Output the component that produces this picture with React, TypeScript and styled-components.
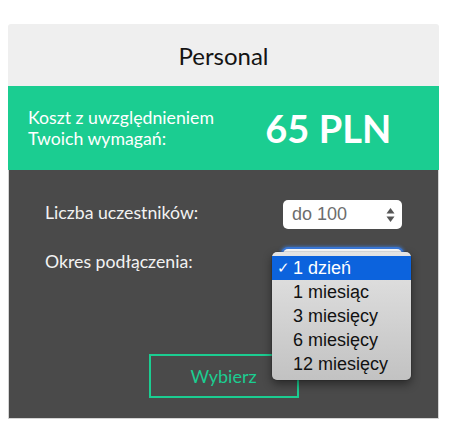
import { FC } from "react";
import styled, { createGlobalStyle } from "styled-components";

const GlobalStyle = createGlobalStyle`
   body {
      margin: 0;
      background: #fff;
      font-family: Lato, "Open Sans", sans-serif;
   }
`;

const Card = styled.div`
   width: 431px;
   margin: 24px 0 0 8px;
   border-radius: 3px 3px 0 0;
`;

const Header = styled.div`
   height: 62px;
   background: #efefef;
   border-radius: 3px 3px 0 0;
   display: flex;
   align-items: center;
   justify-content: center;
   font-size: 24px;
   color: #141414;
`;

const PriceBar = styled.div`
   height: 84px;
   background: #1bcd91;
   display: grid;
   grid-template-columns: 1fr 1fr;
   align-items: center;
   color: #fff;
`;

const PriceLabel = styled.p`
   margin: 0;
   padding-left: 20px;
   font-size: 17.7px;
   line-height: 21px;
`;

const Price = styled.p`
   margin: 0;
   text-align: center;
   font-size: 38px;
   font-weight: 700;
   padding-right: 6px;
`;

const Body = styled.div`
   background: #4a4a4a;
   border: 1px solid #d4d4d4;
   border-top: none;
   padding: 30px 36px 20px;
   display: flex;
   flex-direction: column;
   align-items: center;
`;

const Form = styled.div`
   width: 100%;
   display: grid;
   grid-template-columns: 1fr 119px;
   grid-auto-rows: 29px;
   row-gap: 20px;
   align-items: center;
`;

const Label = styled.span`
   color: #f2f2f2;
   font-size: 17.7px;
   margin-top: -5px;
`;

const SelectBox = styled.div<{ $focused?: boolean }>`
   position: relative;
   height: 29px;
   border-radius: 5px;
   background: #fff;
   display: flex;
   align-items: center;
   justify-content: space-between;
   padding: 0 7px 0 9px;
   box-sizing: border-box;
   font-family: "Liberation Sans", Arial, sans-serif;
   font-size: 18px;
   color: #6d6d6d;
   box-shadow: ${(p) =>
      p.$focused ? "0 0 0 2px #3a78d8, 0 0 3px 3px rgba(60,130,230,0.6)" : "none"};
`;

const Popup = styled.ul`
   position: absolute;
   left: -11px;
   top: 3px;
   width: 139px;
   margin: 0;
   padding: 4px 0;
   list-style: none;
   border-radius: 5px;
   background: linear-gradient(#e4e4e4, #c2c2c2);
   box-shadow: 0 4px 10px rgba(0, 0, 0, 0.45), 0 0 0 0.5px rgba(0, 0, 0, 0.2);
   z-index: 2;
`;

const Option = styled.li<{ $selected?: boolean }>`
   height: 24px;
   display: flex;
   align-items: center;
   padding-left: 21px;
   position: relative;
   font-family: "Liberation Sans", Arial, sans-serif;
   font-size: 18px;
   color: ${(p) => (p.$selected ? "#fff" : "#111")};
   background: ${(p) => (p.$selected ? "#0c63dd" : "transparent")};
`;

const Check = styled.span`
   position: absolute;
   left: 5px;
   font-size: 15px;
`;

const Button = styled.button`
   margin-top: 76px;
   width: 150px;
   height: 44px;
   background: transparent;
   border: 2px solid #1bcd91;
   color: #1bcd91;
   font-family: Lato, "Open Sans", sans-serif;
   font-size: 18px;
   cursor: pointer;
`;

const Arrows: FC = () => (
   <svg width="9" height="16" viewBox="0 0 9 16">
      <path d="M4.5 1 L8.5 6.5 L0.5 6.5 Z" fill="#555" />
      <path d="M4.5 15 L8.5 9.5 L0.5 9.5 Z" fill="#555" />
   </svg>
);

const periods = ["1 dzień", "1 miesiąc", "3 miesięcy", "6 miesięcy", "12 miesięcy"];

const App: FC = () => {
   return (
      <>
         <GlobalStyle />
         <Card>
            <Header>Personal</Header>
            <PriceBar>
               <PriceLabel>
                  Koszt z uwzględnieniem
                  <br />
                  Twoich wymagań:
               </PriceLabel>
               <Price>65 PLN</Price>
            </PriceBar>
            <Body>
               <Form>
                  <Label>Liczba uczestników:</Label>
                  <SelectBox>
                     <span>do 100</span>
                     <Arrows />
                  </SelectBox>
                  <Label>Okres podłączenia:</Label>
                  <SelectBox $focused>
                     <Popup>
                        {periods.map((p, i) => (
                           <Option key={p} $selected={i === 0}>
                              {i === 0 && <Check>✓</Check>}
                              {p}
                           </Option>
                        ))}
                     </Popup>
                  </SelectBox>
               </Form>
               <Button>Wybierz</Button>
            </Body>
         </Card>
      </>
   );
};

export default App;
